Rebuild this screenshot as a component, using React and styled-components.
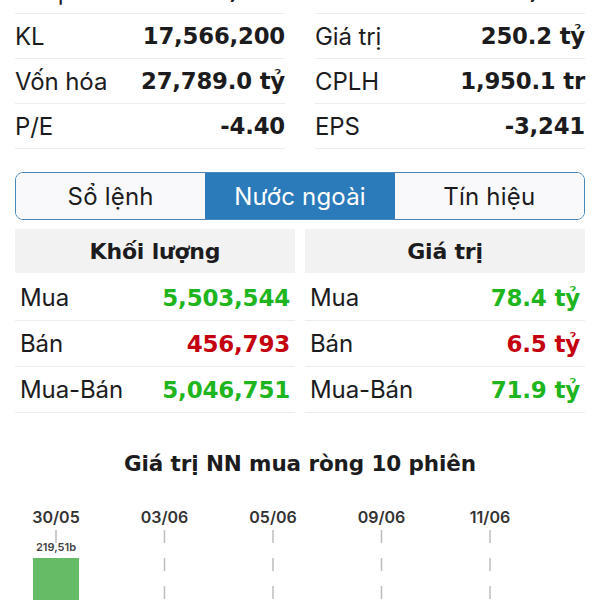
import React from "react";
import styled, { createGlobalStyle } from "styled-components";

const Global = createGlobalStyle`
  html, body { margin: 0; padding: 0; background: #ffffff; }
  body { font-family: Inter, "Noto Sans", sans-serif; color: #1c1c1e; overflow: hidden; }
`;

const BOLD_FONT = `"DejaVu Sans", Inter, sans-serif`;

const Page = styled.div`
  width: 600px;
  height: 600px;
  overflow: hidden;
`;

const Section = styled.div`
  padding: 0 15px;
`;

const StatsGrid = styled.div`
  display: grid;
  grid-template-columns: 1fr 1fr;
  column-gap: 30px;
  margin-top: -31px;
`;

const StatRow = styled.div`
  height: 44px;
  display: flex;
  align-items: center;
  justify-content: space-between;
  border-bottom: 1px solid #ececec;
`;

const Label = styled.span`
  font-family: Inter, sans-serif;
  font-weight: 400;
  font-size: 24px;
  letter-spacing: -0.1px;
  color: #1c1c1e;
`;

const Value = styled.span`
  font-family: ${BOLD_FONT};
  font-weight: 700;
  font-size: ${(p) => p.$size || 23}px;
  letter-spacing: -0.2px;
  color: ${(p) => p.$color || "#1c1c1e"};
`;

const Tabs = styled.div`
  display: flex;
  margin-top: 23px;
  height: 48px;
  border: 1.5px solid #4b86b8;
  border-radius: 8px;
  overflow: hidden;
  box-sizing: border-box;
`;

const Tab = styled.div`
  flex: 1;
  display: flex;
  align-items: center;
  justify-content: center;
  font-size: 24px;
  letter-spacing: 0.2px;
  background: ${(p) => (p.$active ? "#2b7bbb" : "#f9f9fb")};
  color: ${(p) => (p.$active ? "#ffffff" : "#1c1c1e")};
`;

const Foreign = styled.div`
  display: grid;
  grid-template-columns: 1fr 1fr;
  column-gap: 10px;
  margin-top: 9px;
`;

const Column = styled.div`
  display: flex;
  flex-direction: column;
`;

const Header = styled.div`
  height: 44px;
  display: flex;
  align-items: center;
  justify-content: center;
  background: #f2f2f2;
  font-family: ${BOLD_FONT};
  font-weight: 700;
  font-size: 22px;
  letter-spacing: -0.2px;
  margin-bottom: 2px;
`;

const DataRow = styled.div`
  height: 45px;
  display: flex;
  align-items: center;
  justify-content: space-between;
  padding: 0 5px;
  border-bottom: 1px solid #ededed;
`;

const ChartTitle = styled.div`
  margin-top: 36px;
  text-align: center;
  font-family: ${BOLD_FONT};
  font-weight: 700;
  font-size: 21.5px;
  line-height: 30px;
  letter-spacing: -0.1px;
`;

const ChartSvg = styled.svg`
  display: block;
  margin-top: 11px;
`;

const GREEN = "#1fb51f";
const RED = "#c4000f";

const stats = [
  [["Thấp", "16,200"], ["Cao", "17,250"]],
  [["KL", "17,566,200"], ["Giá trị", "250.2 tỷ"]],
  [["Vốn hóa", "27,789.0 tỷ"], ["CPLH", "1,950.1 tr"]],
  [["P/E", "-4.40"], ["EPS", "-3,241"]],
];

const volume = [
  ["Mua", "5,503,544", GREEN],
  ["Bán", "456,793", RED],
  ["Mua-Bán", "5,046,751", GREEN],
];

const value = [
  ["Mua", "78.4 tỷ", GREEN],
  ["Bán", "6.5 tỷ", RED],
  ["Mua-Bán", "71.9 tỷ", GREEN],
];

const dates = [
  ["30/05", 56],
  ["03/06", 164.5],
  ["05/06", 273],
  ["09/06", 381.5],
  ["11/06", 490],
];

export default function App() {
  return (
    <Page>
      <Global />
      <Section>
        <StatsGrid>
          {stats.map((pair, i) =>
            pair.map(([l, v], j) => (
              <StatRow key={`${i}-${j}`}>
                <Label>{l}</Label>
                <Value $size={22.8}>{v}</Value>
              </StatRow>
            ))
          )}
        </StatsGrid>
        <Tabs>
          <Tab>Sổ lệnh</Tab>
          <Tab $active>Nước ngoài</Tab>
          <Tab>Tín hiệu</Tab>
        </Tabs>
        <Foreign>
          <Column>
            <Header>Khối lượng</Header>
            {volume.map(([l, v, c]) => (
              <DataRow key={l}>
                <Label>{l}</Label>
                <Value $color={c}>{v}</Value>
              </DataRow>
            ))}
          </Column>
          <Column>
            <Header>Giá trị</Header>
            {value.map(([l, v, c]) => (
              <DataRow key={l}>
                <Label>{l}</Label>
                <Value $color={c}>{v}</Value>
              </DataRow>
            ))}
          </Column>
        </Foreign>
      </Section>
      <ChartTitle>Giá trị NN mua ròng 10 phiên</ChartTitle>
      <ChartSvg width="600" height="120" viewBox="0 490 600 120">
        {dates.map(([d, x]) => (
          <g key={d}>
            <text
              x={x}
              y="523"
              textAnchor="middle"
              fontFamily="Inter, sans-serif"
              fontSize="16"
              fontWeight="600"
              fill="#333"
            >
              {d}
            </text>
            <line
              x1={x}
              x2={x}
              y1="530"
              y2="610"
              stroke="#bdbdbd"
              strokeWidth="1.5"
              strokeDasharray="13 15"
            />
          </g>
        ))}
        <rect x="48" y="543" width="16" height="10" fill="#ffffff" />
        <text
          x="56"
          y="551"
          textAnchor="middle"
          fontFamily="Inter, sans-serif"
          fontSize="11"
          fontWeight="600"
          fill="#444"
        >
          219,51b
        </text>
        <rect x="33" y="558" width="46" height="60" fill="#66bb66" />
      </ChartSvg>
    </Page>
  );
}
